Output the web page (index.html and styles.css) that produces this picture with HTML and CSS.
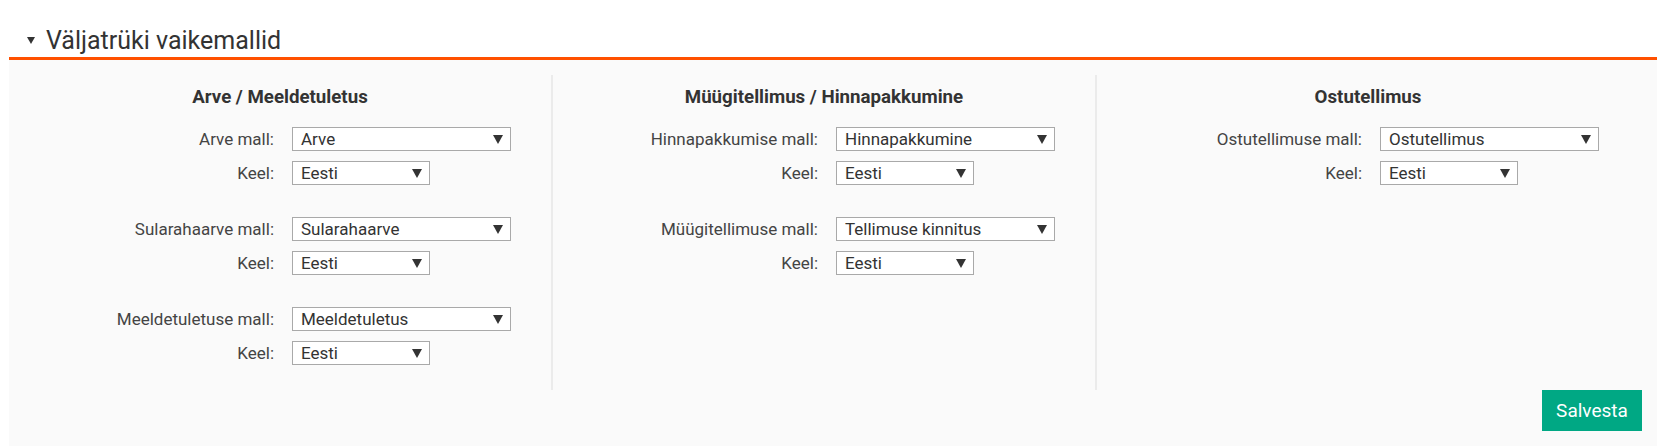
FILE: index.html
```html
<!DOCTYPE html>
<html lang="et">
<head>
<meta charset="utf-8">
<title>Väljatrüki vaikemallid</title>
<link rel="stylesheet" href="styles.css">
</head>
<body>
<div class="section">
  <div class="section-title">
    <span class="caret"></span>
    <span class="title-text">Väljatrüki vaikemallid</span>
  </div>
  <div class="panel">
    <div class="columns">
      <div class="col">
        <h3 class="col-title">Arve / Meeldetuletus</h3>
        <div class="group">
          <div class="row"><span class="label">Arve mall:</span><div class="select wide"><span class="val">Arve</span><span class="arrow"></span></div></div>
          <div class="row"><span class="label">Keel:</span><div class="select narrow"><span class="val">Eesti</span><span class="arrow"></span></div></div>
        </div>
        <div class="group">
          <div class="row"><span class="label">Sularahaarve mall:</span><div class="select wide"><span class="val">Sularahaarve</span><span class="arrow"></span></div></div>
          <div class="row"><span class="label">Keel:</span><div class="select narrow"><span class="val">Eesti</span><span class="arrow"></span></div></div>
        </div>
        <div class="group">
          <div class="row"><span class="label">Meeldetuletuse mall:</span><div class="select wide"><span class="val">Meeldetuletus</span><span class="arrow"></span></div></div>
          <div class="row"><span class="label">Keel:</span><div class="select narrow"><span class="val">Eesti</span><span class="arrow"></span></div></div>
        </div>
      </div>
      <div class="col col-divided">
        <h3 class="col-title">Müügitellimus / Hinnapakkumine</h3>
        <div class="group">
          <div class="row"><span class="label">Hinnapakkumise mall:</span><div class="select wide"><span class="val">Hinnapakkumine</span><span class="arrow"></span></div></div>
          <div class="row"><span class="label">Keel:</span><div class="select narrow"><span class="val">Eesti</span><span class="arrow"></span></div></div>
        </div>
        <div class="group">
          <div class="row"><span class="label">Müügitellimuse mall:</span><div class="select wide"><span class="val">Tellimuse kinnitus</span><span class="arrow"></span></div></div>
          <div class="row"><span class="label">Keel:</span><div class="select narrow"><span class="val">Eesti</span><span class="arrow"></span></div></div>
        </div>
      </div>
      <div class="col col-divided">
        <h3 class="col-title">Ostutellimus</h3>
        <div class="group">
          <div class="row"><span class="label">Ostutellimuse mall:</span><div class="select wide"><span class="val">Ostutellimus</span><span class="arrow"></span></div></div>
          <div class="row"><span class="label">Keel:</span><div class="select narrow"><span class="val">Eesti</span><span class="arrow"></span></div></div>
        </div>
      </div>
    </div>
    <div class="actions">
      <button class="btn-save" type="button">Salvesta</button>
    </div>
  </div>
</div>
</body>
</html>
```
FILE: styles.css
```css
html, body {
  margin: 0;
  padding: 0;
  background: #ffffff;
}
body {
  font-family: Roboto, "Liberation Sans", Arial, sans-serif;
  color: #333333;
}
.section {
  margin-left: 9px;
}
.section-title {
  display: flex;
  align-items: center;
  height: 33px;
  padding-top: 24px;
  border-bottom: 3px solid #ff5000;
}
.caret {
  width: 0;
  height: 0;
  border-left: 4px solid transparent;
  border-right: 4px solid transparent;
  border-top: 7px solid #333333;
  margin-left: 18px;
  margin-right: 11px;
}
.title-text {
  font-size: 25px;
  line-height: 30px;
  color: #333333;
}
.panel {
  background: #fafafa;
  padding: 15px 15px 15px 0;
}
.columns {
  display: flex;
}
.col {
  width: 542px;
  flex: 0 0 542px;
  padding: 11px 0 25px;
  box-sizing: border-box;
}
.col-divided {
  border-left: 2px solid #ebebeb;
  flex-basis: 544px;
  width: 544px;
}
.col-title {
  margin: 0 0 18px;
  text-align: center;
  font-size: 18.7px;
  line-height: 23px;
  font-weight: 700;
  color: #333333;
}
.group {
  display: flex;
  flex-direction: column;
  gap: 10px;
  margin-bottom: 32px;
}
.group:last-child {
  margin-bottom: 0;
}
.row {
  display: grid;
  grid-template-columns: 265px auto;
  column-gap: 18px;
  align-items: center;
}
.label {
  text-align: right;
  font-size: 17px;
  line-height: 20px;
  color: #444444;
}
.select {
  box-sizing: border-box;
  height: 24px;
  border: 1px solid #a9a9a9;
  background: #ffffff;
  display: flex;
  align-items: center;
  justify-content: space-between;
  padding: 0 7px 0 8px;
  font-size: 17px;
  line-height: 20px;
  color: #333333;
}
.select.wide {
  width: 219px;
}
.select.narrow {
  width: 138px;
}
.arrow {
  width: 0;
  height: 0;
  border-left: 5.5px solid transparent;
  border-right: 5.5px solid transparent;
  border-top: 9px solid #333333;
}
.actions {
  display: flex;
  justify-content: flex-end;
}
.btn-save {
  width: 100px;
  height: 41px;
  border: none;
  background: #00a884;
  color: #ffffff;
  font-family: Roboto, "Liberation Sans", Arial, sans-serif;
  font-size: 19px;
  padding: 0;
  cursor: pointer;
}
```
